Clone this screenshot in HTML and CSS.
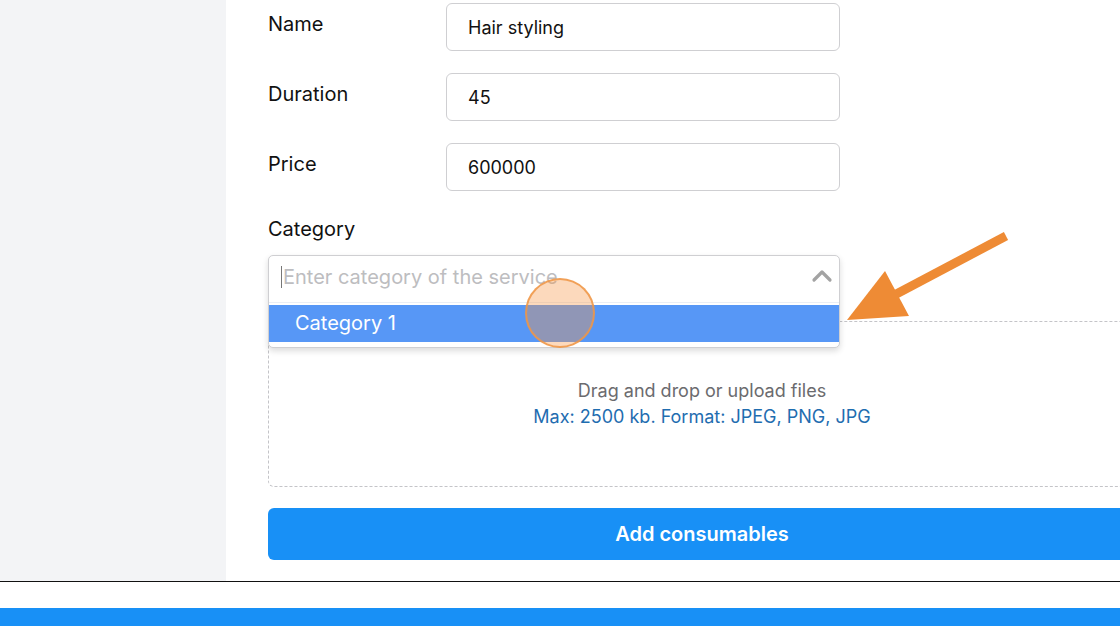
FILE: index.html
```html
<!DOCTYPE html>
<html lang="en">
<head>
<meta charset="utf-8">
<title>Service form</title>
<link rel="stylesheet" href="styles.css">
</head>
<body>
<div class="page">
  <div class="app">
    <aside class="sidebar"></aside>
    <main class="main">
      <div class="fields">
        <label class="label">Name</label>
        <div class="input">Hair styling</div>
        <label class="label">Duration</label>
        <div class="input">45</div>
        <label class="label">Price</label>
        <div class="input">600000</div>
      </div>
      <div class="category">
        <div class="cat-label">Category</div>
        <div class="combo">
          <div class="combo-box">
            <div class="combo-control">
              <span class="caret"></span>
              <span class="placeholder">Enter category of the service</span>
              <svg class="chev" width="22" height="14" viewBox="0 0 22 14"><polyline points="3,11 11,3 19,11" fill="none" stroke="#a3a3a3" stroke-width="3.2" stroke-linecap="round" stroke-linejoin="round"/></svg>
            </div>
            <div class="combo-menu">
              <div class="option">Category 1</div>
            </div>
          </div>
        </div>
      </div>
      <div class="dropzone">
        <div class="dz-title">Drag and drop or upload files</div>
        <div class="dz-hint">Max: 2500 kb. Format: JPEG, PNG, JPG</div>
      </div>
      <button class="add-btn">Add consumables</button>
    </main>
  </div>
  <div class="footer-gap"></div>
  <div class="footer-bar"></div>

  <div class="click-dot"></div>
  <svg class="arrow" width="1120" height="626" viewBox="0 0 1120 626">
    <line x1="1006" y1="236" x2="885" y2="300" stroke="#ee8b35" stroke-width="9"/>
    <polygon points="847,320 885,271 909,316" fill="#ee8b35"/>
  </svg>
</div>
</body>
</html>
```
FILE: styles.css
```css
* { box-sizing: border-box; }
html, body { margin: 0; padding: 0; }
body {
  width: 1120px;
  height: 626px;
  overflow: hidden;
  background: #fff;
  font-family: Inter, "Noto Sans", "Liberation Sans", sans-serif;
  color: #111;
}
.page { position: relative; width: 1120px; height: 626px; overflow: hidden; }
.app {
  display: flex;
  height: 582px;
  border-bottom: 1px solid #111;
}
.sidebar { width: 226px; flex: none; background: #f3f4f6; }
.main {
  flex: 1;
  padding: 3px 0 0 42px;
  overflow: hidden;
}
.fields {
  display: grid;
  grid-template-columns: 178px 394px;
  grid-auto-rows: 48px;
  row-gap: 22px;
}
.label {
  font-size: 20px;
  line-height: 24px;
  padding-top: 9px;
  color: #111;
}
.input {
  border: 1px solid #cfcfd2;
  border-radius: 6px;
  font-size: 18px;
  line-height: 24px;
  padding: 12px 21px;
  color: #111;
  background: #fff;
}
.category { margin-top: 26px; width: 572px; }
.cat-label { font-size: 20px; line-height: 24px; height: 24px; margin-bottom: 16px; }
.combo { position: relative; height: 48px; }
.combo-box {
  position: absolute;
  left: 0; top: -2px; right: 0;
  border: 1px solid #cfcfd2;
  border-radius: 5px;
  background: #fff;
  box-shadow: 0 3px 6px rgba(0,0,0,0.14);
  z-index: 2;
}
.combo-control {
  display: flex;
  align-items: center;
  height: 46px;
  padding: 0 6px 4px 12px;
  position: relative;
}
.caret { width: 1px; height: 22px; background: #777; margin-right: 1px; }
.placeholder { font-size: 20px; color: #bdbdc0; flex: 1; }
.chev { margin-right: 0; margin-top: -2px; }
.combo-menu { padding: 2px 0 5px; border-top: 1px solid #eaeef5; }
.option {
  background: #5797f6;
  color: #fff;
  font-size: 20px;
  height: 37px;
  line-height: 37px;
  padding-left: 26px;
}
.dropzone {
  margin-top: 16px;
  width: 868px;
  height: 166px;
  border: 1px dashed #c4c4c8;
  border-radius: 6px;
  display: flex;
  flex-direction: column;
  align-items: center;
  justify-content: center;
  font-size: 18px;
  line-height: 26px;
}
.dz-title { color: #6b6b6e; }
.dz-hint { color: #1f6db0; }
.add-btn {
  display: block;
  margin-top: 21px;
  width: 868px;
  height: 52px;
  border: none;
  border-radius: 6px;
  background: #1890f6;
  color: #fff;
  font-family: inherit;
  font-size: 20px;
  font-weight: 600;
}
.footer-gap { height: 26px; }
.footer-bar { height: 18px; background: #1890f6; }
.click-dot {
  position: absolute;
  left: 525px; top: 278px;
  width: 70px; height: 70px;
  border-radius: 50%;
  background: rgba(247,150,70,0.36);
  border: 2px solid rgba(240,150,70,0.85);
  z-index: 5;
}
.arrow { position: absolute; left: 0; top: 0; z-index: 6; pointer-events: none; }
```
